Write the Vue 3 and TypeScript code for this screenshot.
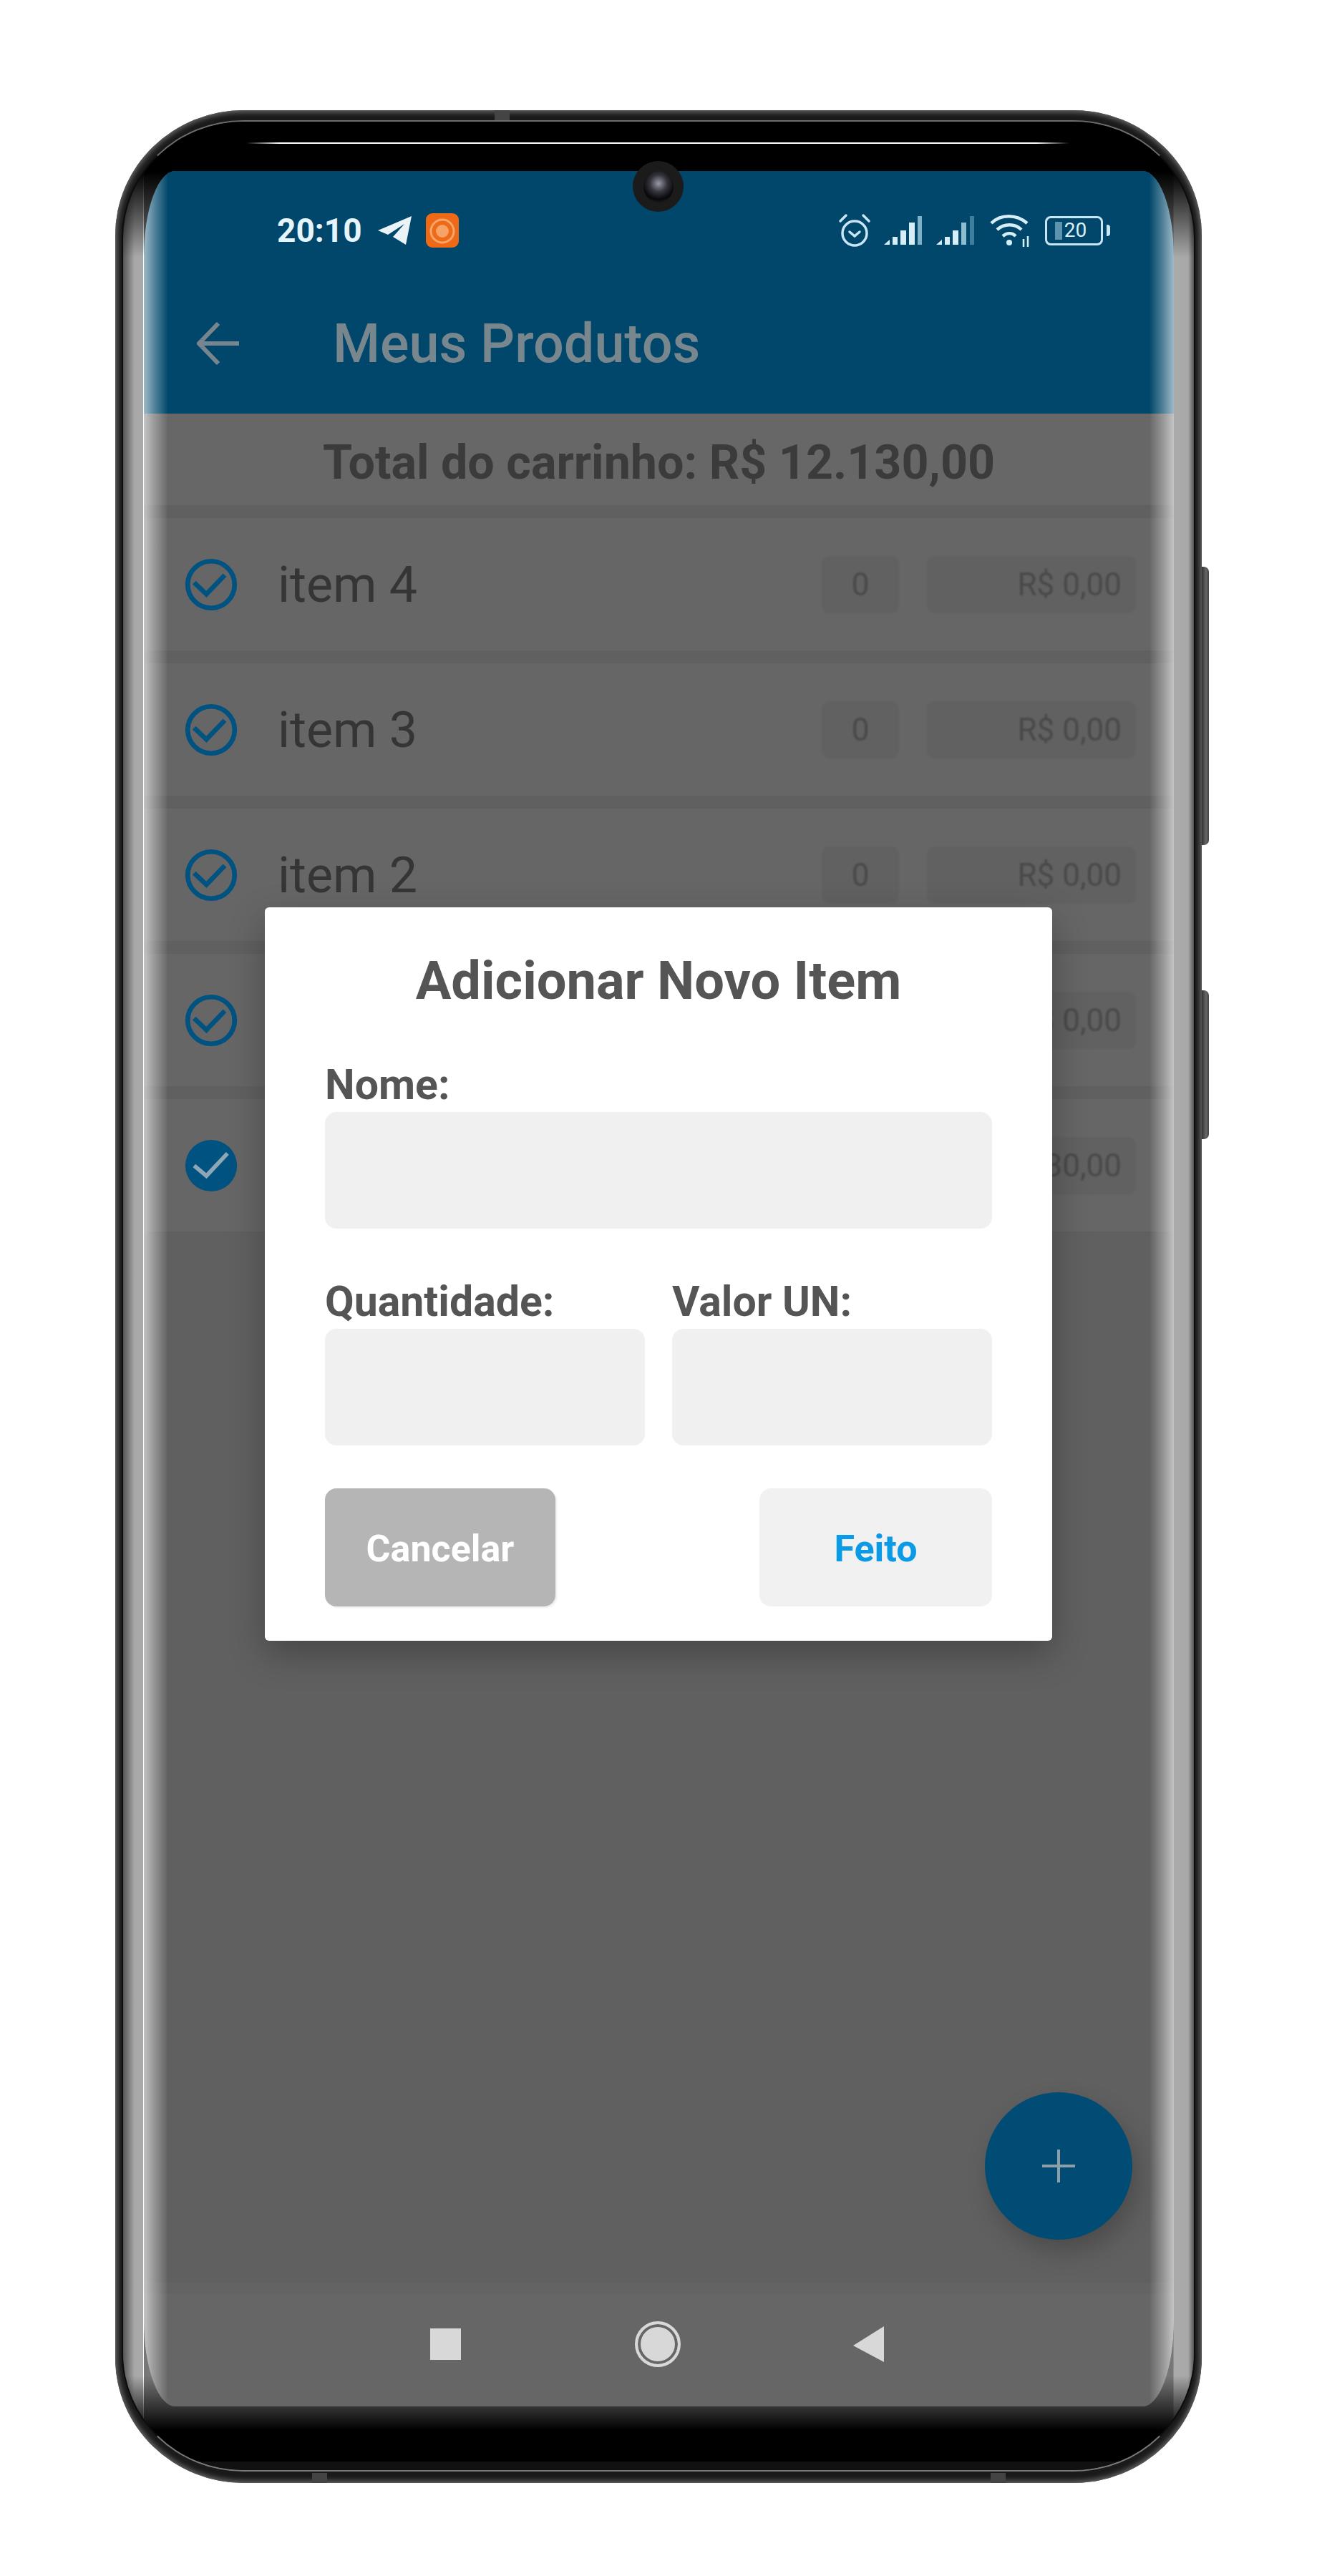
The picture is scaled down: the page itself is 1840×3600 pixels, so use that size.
<script setup lang="ts">
import { ref } from 'vue'

interface CartItem {
  name: string
  qty: number
  amount: string
  done: boolean
}

const items = ref<CartItem[]>([
  { name: 'item 4', qty: 0, amount: 'R$ 0,00', done: false },
  { name: 'item 3', qty: 0, amount: 'R$ 0,00', done: false },
  { name: 'item 2', qty: 0, amount: 'R$ 0,00', done: false },
  { name: 'item 1', qty: 0, amount: 'R$ 0,00', done: false },
  { name: 'item 0', qty: 1, amount: 'R$ 12.130,00', done: true },
])

const nome = ref('')
const quantidade = ref('')
const valor = ref('')
</script>

<template>
  <div class="page">
    <div class="phone">
      <span class="side-key key-a"></span>
      <span class="side-key key-b"></span>
      <span class="antenna ant-top"></span>
      <span class="antenna ant-bl"></span>
      <span class="antenna ant-br"></span>

      <div class="rim">
        <div class="glass">
          <span class="speaker"></span>
          <span class="camera"><span class="lens"></span></span>

          <div class="screen">
            <header class="header">
              <div class="status">
                <div class="status-left">
                  <span class="clock">20:10</span>
                  <svg class="tg" viewBox="0 0 47 40">
                    <path d="M47 0 0 20l14 6 23-15-16 18 18 11L47 0Z" fill="#e9f3f8" />
                  </svg>
                  <svg class="rec" viewBox="0 0 46 48">
                    <rect width="46" height="48" rx="9" fill="#ee6a17" />
                    <circle cx="23" cy="25" r="16" fill="none" stroke="#f9a56c" stroke-width="3" />
                    <circle cx="23" cy="25" r="9" fill="#f7a266" />
                  </svg>
                </div>
                <div class="status-right">
                  <svg class="alarm" viewBox="0 0 46 48" fill="none" stroke="#c8e6f3" stroke-width="3.5">
                    <circle cx="23" cy="28" r="17" />
                    <path d="m16 26 7 6 7-6M3 11 11 3M43 11l-8-8" stroke-linecap="round" />
                  </svg>
                  <svg class="signal" viewBox="0 0 55 40">
                    <path d="M0 40 8 33v7H0ZM12 29h7v11h-7ZM23 20h8v20h-8ZM35 9h8v31h-8Z" fill="#d6eef8" />
                    <path d="M47 0h6v40h-6Z" fill="#7fb0c6" />
                  </svg>
                  <svg class="signal" viewBox="0 0 55 40">
                    <path d="M0 40 8 33v7H0ZM12 29h7v11h-7ZM23 20h8v20h-8Z" fill="#d6eef8" />
                    <path d="M35 9h7v31h-7Z" fill="#8fbdd0" />
                    <path d="M47 0h6v40h-6Z" fill="#3f7f9e" />
                  </svg>
                  <svg class="wifi" viewBox="0 0 56 48" fill="none" stroke="#d6eef8" stroke-width="4.5">
                    <path d="M2 14C15 1 37 1 52 14M10 23c10-9 25-9 34 0M18 32c6-5 13-5 18 0" />
                    <circle cx="27" cy="41" r="4" fill="#d6eef8" stroke="none" />
                    <path d="M47 36v11M53 32v15" stroke-width="2.5" />
                  </svg>
                  <div class="battery">
                    <span class="battery-fill"></span>
                    <span class="battery-num">20</span>
                  </div>
                  <span class="battery-nub"></span>
                </div>
              </div>
              <div class="toolbar">
                <svg class="back" viewBox="0 0 60 60" fill="none" stroke="#77868e" stroke-width="6">
                  <path d="M59 30H4M30 2 3 30l27 28" />
                </svg>
                <h1 class="title">Meus Produtos</h1>
              </div>
            </header>

            <div class="total">Total do carrinho: R$ 12.130,00</div>

            <ul class="list">
              <li v-for="item in items" :key="item.name" class="row">
                <svg class="check" viewBox="0 0 80 80">
                  <template v-if="item.done">
                    <circle cx="40" cy="40" r="38" fill="#005280" />
                    <path d="m15 40 18 15 31-33" fill="none" stroke="#8ea7b5" stroke-width="6" />
                  </template>
                  <template v-else>
                    <circle cx="40" cy="40" r="34.5" fill="none" stroke="#005280" stroke-width="7" />
                    <path d="m15 37 18 17 27-28" fill="none" stroke="#005280" stroke-width="7" />
                  </template>
                </svg>
                <span class="item-name">{{ item.name }}</span>
                <span class="qty">{{ item.qty }}</span>
                <span class="amount">{{ item.amount }}</span>
              </li>
            </ul>

            <div class="spacer"></div>

            <nav class="navbar">
              <span class="nav-square"></span>
              <span class="nav-home"></span>
              <svg class="nav-back" viewBox="0 0 43 50"><path d="M43 0v50L0 27Z" fill="#d8d8d8" /></svg>
            </nav>

            <button class="fab" type="button">
              <svg viewBox="0 0 46 46" fill="none" stroke="#8e9fa8" stroke-width="4">
                <path d="M23 0v46M0 23h46" />
              </svg>
            </button>

            <span class="edge edge-l"></span>
            <span class="edge edge-r"></span>

            <div class="modal">
              <h2 class="modal-title">Adicionar Novo Item</h2>
              <label class="field field-name">
                <span class="label">Nome:</span>
                <input v-model="nome" class="input" type="text" />
              </label>
              <div class="field-row">
                <label class="field">
                  <span class="label">Quantidade:</span>
                  <input v-model="quantidade" class="input" type="text" />
                </label>
                <label class="field">
                  <span class="label">Valor UN:</span>
                  <input v-model="valor" class="input" type="text" />
                </label>
              </div>
              <div class="actions">
                <button class="btn btn-cancel" type="button">Cancelar</button>
                <button class="btn btn-done" type="button">Feito</button>
              </div>
            </div>
          </div>
        </div>
      </div>
    </div>
  </div>
</template>

<style>
html,
body {
  background: #fff;
}
</style>

<style scoped>
.page {
  width: 1840px;
  height: 3600px;
  box-sizing: border-box;
  padding-top: 154px;
  display: flex;
  justify-content: center;
  background: #fff;
  font-family: Roboto, 'Liberation Sans', sans-serif;
  overflow: hidden;
}

/* device frame */
.phone {
  position: relative;
  width: 1518px;
  height: 3316px;
  box-sizing: border-box;
  padding: 14px 9px 16px;
  display: flex;
  border-radius: 180px / 175px;
  background: #1a1a1a;
  box-shadow: inset 0 0 7px 3px #666;
}

.side-key {
  position: absolute;
  left: 100%;
  width: 10px;
  background: linear-gradient(90deg, #333, #666 60%, #444);
  border-radius: 0 7px 7px 0;
}

.key-a {
  top: 638px;
  height: 389px;
}

.key-b {
  top: 1230px;
  height: 208px;
}

.antenna {
  position: absolute;
  width: 21px;
  height: 14px;
  background: #444;
}

.ant-top {
  top: 0;
  left: 530px;
}

.ant-bl {
  bottom: 0;
  left: 275px;
}

.ant-br {
  bottom: 0;
  left: 1223px;
}

.rim {
  flex: 1;
  display: flex;
  border: 2px solid;
  border-color: #6d6d6d #0c0c0c #7a7a7a #0c0c0c;
  border-radius: 170px / 165px;
}

.glass {
  position: relative;
  flex: 1;
  box-sizing: border-box;
  padding: 69px 28px 89px 29px;
  display: flex;
  border-radius: 168px / 163px;
  background:
    linear-gradient(180deg, #000 0, #000 70px, transparent 190px, transparent calc(100% - 132px), #000 calc(100% - 55px), #000 calc(100% - 12px), #111 calc(100% - 12px)),
    linear-gradient(90deg, #555 0, #a8a8a8 16px, #aaa 28px, #fff 28px, #fff 29px, #777 29px, #777 calc(100% - 29px), #aaa calc(100% - 28px), #a8a8a8 calc(100% - 8px), #555 100%);
}

.speaker {
  position: absolute;
  top: 29px;
  left: 172px;
  width: 1150px;
  height: 2px;
  background: linear-gradient(90deg, transparent, #fff 4%, #fff 96%, transparent);
}

.camera {
  position: absolute;
  z-index: 5;
  top: 55px;
  left: 712px;
  width: 71px;
  height: 71px;
  display: flex;
  align-items: center;
  justify-content: center;
  border-radius: 50%;
  background: #1b1b1b;
}

.lens {
  width: 42px;
  height: 46px;
  border-radius: 50%;
  background: radial-gradient(circle at 50% 40%, #9a9aa6 0, #33333b 35%, #08080a 65%, #3a3a3a 100%);
}

/* screen */
.screen {
  position: relative;
  flex: 1;
  min-width: 0;
  display: flex;
  flex-direction: column;
  overflow: hidden;
  border-radius: 44px / 120px;
  background: #606060;
}

.edge {
  position: absolute;
  top: 0;
  bottom: 0;
  width: 34px;
  pointer-events: none;
}

.edge-l {
  left: 0;
  background: linear-gradient(90deg, rgba(255, 255, 255, 0.62), rgba(255, 255, 255, 0.35) 40%, rgba(255, 255, 255, 0));
}

.edge-r {
  right: 0;
  background: linear-gradient(270deg, rgba(255, 255, 255, 0.62), rgba(255, 255, 255, 0.35) 40%, rgba(255, 255, 255, 0));
}

.header {
  height: 339px;
  flex: none;
  background: #01476b;
}

.status {
  height: 166px;
  box-sizing: border-box;
  padding: 0 89px 0 186px;
  display: flex;
  align-items: center;
  justify-content: space-between;
}

.status-left,
.status-right {
  display: flex;
  align-items: center;
}

.clock {
  width: 141px;
  color: #e6f4fb;
  font-size: 46px;
  font-weight: 700;
  line-height: 48px;
}

.tg {
  width: 47px;
  height: 40px;
}

.rec {
  width: 46px;
  height: 48px;
  margin-left: 20px;
}

.alarm {
  width: 46px;
  height: 48px;
  margin-right: 18px;
}

.signal {
  width: 55px;
  height: 40px;
  margin-right: 18px;
}

.wifi {
  width: 56px;
  height: 48px;
  margin-left: 2px;
  margin-right: 21px;
}

.battery {
  position: relative;
  width: 81px;
  height: 41px;
  box-sizing: border-box;
  display: flex;
  align-items: center;
  justify-content: center;
  border: 3px solid #c8e6f3;
  border-radius: 8px;
}

.battery-fill {
  position: absolute;
  top: 5px;
  bottom: 5px;
  left: 11px;
  width: 10px;
  background: #5d93ad;
}

.battery-num {
  margin-left: 4px;
  color: #dcf0f9;
  font-size: 28px;
  line-height: 30px;
}

.battery-nub {
  width: 5px;
  height: 16px;
  margin-left: 5px;
  border-radius: 0 4px 4px 0;
  background: #c8e6f3;
}

.toolbar {
  height: 173px;
  box-sizing: border-box;
  padding: 0 0 24px 74px;
  display: flex;
  align-items: center;
}

.back {
  width: 60px;
  height: 60px;
  filter: blur(0.6px);
}

.title {
  margin: 0 0 0 130px;
  color: #78868d;
  font-size: 75.5px;
  font-weight: 500;
  line-height: 84px;
  filter: blur(0.7px);
}

.total {
  height: 128px;
  flex: none;
  box-sizing: border-box;
  padding-top: 7px;
  display: flex;
  align-items: center;
  justify-content: center;
  background: #676767;
  color: #3b3b3b;
  font-size: 66.4px;
  font-weight: 700;
  filter: blur(0.7px);
}

.list {
  margin: 0;
  padding: 18px 0 0;
  list-style: none;
  display: flex;
  flex-direction: column;
  gap: 18px;
  flex: none;
  background: #606060;
}

.row {
  height: 185px;
  box-sizing: border-box;
  padding: 0 53px 0 56px;
  display: flex;
  align-items: center;
  background: #666;
}

.check {
  width: 76px;
  height: 76px;
  flex: none;
  filter: blur(0.6px);
}

.item-name {
  flex: 1;
  margin-left: 55px;
  color: #353535;
  font-size: 70px;
  filter: blur(0.6px);
}

.qty,
.amount {
  height: 80px;
  box-sizing: border-box;
  display: flex;
  align-items: center;
  border-radius: 12px;
  background: #616161;
  color: #494949;
  font-size: 44px;
  filter: blur(0.8px);
}

.qty {
  width: 108px;
  justify-content: center;
}

.amount {
  width: 292px;
  margin-left: 39px;
  padding-right: 20px;
  justify-content: flex-end;
}

.spacer {
  flex: 1;
}

.navbar {
  position: relative;
  height: 173px;
  flex: none;
  box-sizing: border-box;
  padding-bottom: 1px;
  display: flex;
  align-items: center;
  background: linear-gradient(180deg, #636363 0, #636363 15px, #666 16px);
}

.nav-square {
  width: 43px;
  height: 44px;
  margin-left: 400px;
  background: #d8d8d8;
}

.nav-home {
  width: 64px;
  height: 64px;
  margin-left: 243px;
  box-sizing: border-box;
  border: 4px solid #d8d8d8;
  border-radius: 50%;
  background: #d8d8d8;
  box-shadow: inset 0 0 0 4px #666;
}

.nav-back {
  width: 43px;
  height: 50px;
  margin-left: 241px;
}

.fab {
  position: absolute;
  right: 58px;
  bottom: 233px;
  width: 206px;
  height: 206px;
  padding: 0;
  display: flex;
  align-items: center;
  justify-content: center;
  border: 0;
  border-radius: 50%;
  background: #004c74;
  box-shadow: 8px 16px 34px rgba(0, 0, 0, 0.22);
}

.fab svg {
  width: 46px;
  height: 46px;
}

/* dialog */
.modal {
  position: absolute;
  top: 1029px;
  left: 169px;
  width: 1100px;
  height: 1025px;
  box-sizing: border-box;
  padding: 61px 84px 0;
  display: flex;
  flex-direction: column;
  border-radius: 6px;
  background: #fff;
  box-shadow: 0 18px 50px rgba(0, 0, 0, 0.28);
}

.modal-title {
  margin: 0;
  color: #555;
  font-size: 74px;
  font-weight: 700;
  line-height: 84px;
  text-align: center;
}

.field {
  display: flex;
  flex-direction: column;
  flex: 1;
  min-width: 0;
}

.field-name {
  flex: none;
  margin-top: 71px;
}

.field-row {
  display: flex;
  gap: 38px;
  margin-top: 70px;
}

.label {
  height: 64px;
  margin-bottom: 6px;
  color: #555;
  font-size: 59px;
  font-weight: 700;
  line-height: 64px;
}

.input {
  width: 100%;
  height: 163px;
  box-sizing: border-box;
  border: 0;
  border-radius: 16px;
  background: #f0f0f0;
}

.actions {
  margin-top: 60px;
  display: flex;
  justify-content: space-between;
}

.btn {
  height: 165px;
  padding: 3px 0 0;
  border: 0;
  border-radius: 16px;
  font-family: inherit;
  font-size: 52px;
  font-weight: 700;
}

.btn-cancel {
  width: 322px;
  background: #b5b5b5;
  color: #fff;
  box-shadow: 2px 2px 3px rgba(0, 0, 0, 0.08);
}

.btn-done {
  width: 325px;
  background: #f1f1f1;
  color: #0a9ae6;
}
</style>
